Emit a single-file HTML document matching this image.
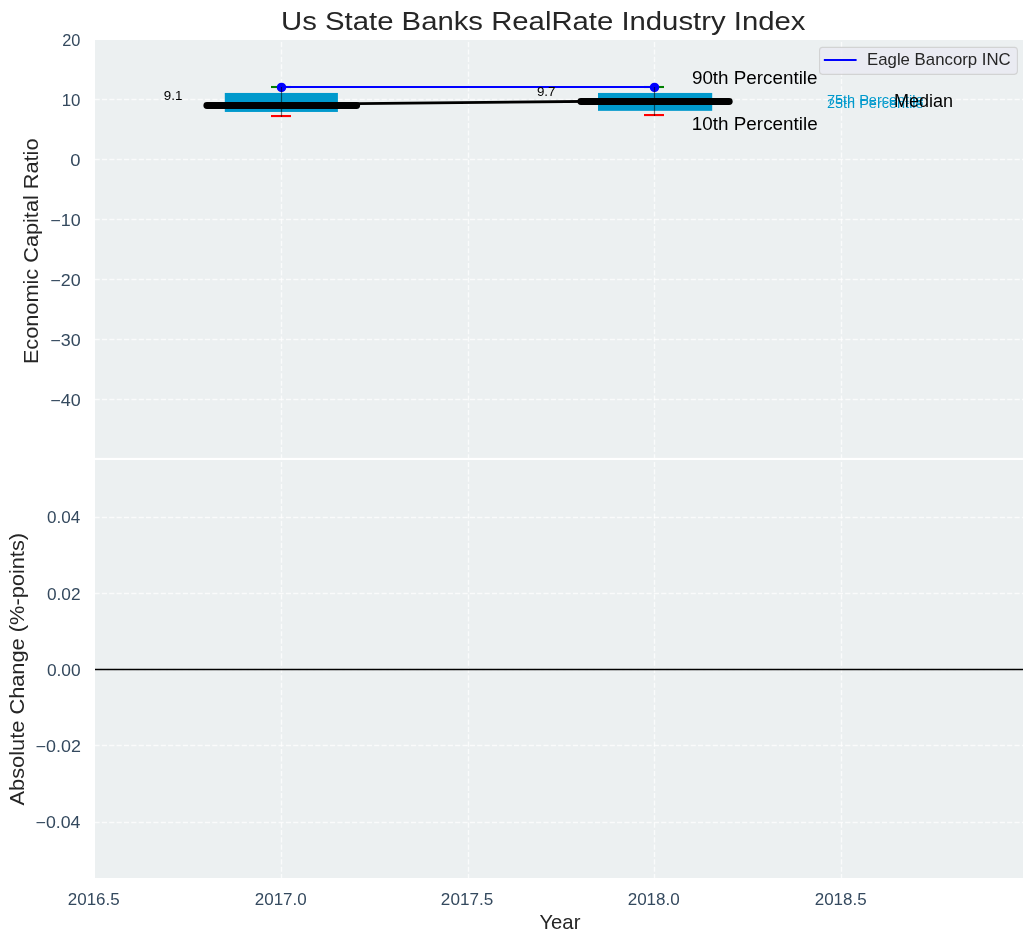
<!DOCTYPE html>
<html><head><meta charset="utf-8"><title>Us State Banks RealRate Industry Index</title>
<style>
html,body{margin:0;padding:0;background:#fff;}
body{width:1034px;height:942px;overflow:hidden;font-family:"Liberation Sans",sans-serif;}
svg{display:block;will-change:transform;}
text{font-family:"Liberation Sans",sans-serif;}
</style></head><body>
<svg width="1034" height="942" viewBox="0 0 1034 942">
<defs>
<clipPath id="c1"><rect x="95" y="40" width="928" height="418"/></clipPath>
<clipPath id="c2"><rect x="95" y="460" width="928" height="418"/></clipPath>
</defs>
<rect x="0" y="0" width="1034" height="942" fill="#ffffff"/>
<rect x="95.0" y="40.0" width="928.0" height="838.0" fill="#ecf0f1"/>
<rect x="95.0" y="457.9" width="928.0" height="2.1" fill="#ffffff"/>
<g clip-path="url(#c1)">
<line x1="95.0" x2="1023.0" y1="99.50" y2="99.50" stroke-dashoffset="0.4" stroke="#ffffff" stroke-opacity="0.72" stroke-width="1.39" stroke-dasharray="5.14 2.22" fill="none"/>
<line x1="95.0" x2="1023.0" y1="159.50" y2="159.50" stroke-dashoffset="0.4" stroke="#ffffff" stroke-opacity="0.72" stroke-width="1.39" stroke-dasharray="5.14 2.22" fill="none"/>
<line x1="95.0" x2="1023.0" y1="219.50" y2="219.50" stroke-dashoffset="0.4" stroke="#ffffff" stroke-opacity="0.72" stroke-width="1.39" stroke-dasharray="5.14 2.22" fill="none"/>
<line x1="95.0" x2="1023.0" y1="279.50" y2="279.50" stroke-dashoffset="0.4" stroke="#ffffff" stroke-opacity="0.72" stroke-width="1.39" stroke-dasharray="5.14 2.22" fill="none"/>
<line x1="95.0" x2="1023.0" y1="339.50" y2="339.50" stroke-dashoffset="0.4" stroke="#ffffff" stroke-opacity="0.72" stroke-width="1.39" stroke-dasharray="5.14 2.22" fill="none"/>
<line x1="95.0" x2="1023.0" y1="399.50" y2="399.50" stroke-dashoffset="0.4" stroke="#ffffff" stroke-opacity="0.72" stroke-width="1.39" stroke-dasharray="5.14 2.22" fill="none"/>
<line x1="281.5" x2="281.5" y1="459.4" y2="30" stroke="#ffffff" stroke-opacity="0.72" stroke-width="1.39" stroke-dasharray="5.14 2.22" fill="none"/>
<line x1="468.5" x2="468.5" y1="459.4" y2="30" stroke="#ffffff" stroke-opacity="0.72" stroke-width="1.39" stroke-dasharray="5.14 2.22" fill="none"/>
<line x1="654.5" x2="654.5" y1="459.4" y2="30" stroke="#ffffff" stroke-opacity="0.72" stroke-width="1.39" stroke-dasharray="5.14 2.22" fill="none"/>
<line x1="841.5" x2="841.5" y1="459.4" y2="30" stroke="#ffffff" stroke-opacity="0.72" stroke-width="1.39" stroke-dasharray="5.14 2.22" fill="none"/>
</g>
<g clip-path="url(#c2)">
<line x1="95.0" x2="1023.0" y1="517.5" y2="517.5" stroke-dashoffset="0.5" stroke="#ffffff" stroke-opacity="0.72" stroke-width="1.39" stroke-dasharray="5.14 2.22" fill="none"/>
<line x1="95.0" x2="1023.0" y1="593.5" y2="593.5" stroke-dashoffset="0.5" stroke="#ffffff" stroke-opacity="0.72" stroke-width="1.39" stroke-dasharray="5.14 2.22" fill="none"/>
<line x1="95.0" x2="1023.0" y1="669.5" y2="669.5" stroke-dashoffset="0.5" stroke="#ffffff" stroke-opacity="0.72" stroke-width="1.39" stroke-dasharray="5.14 2.22" fill="none"/>
<line x1="95.0" x2="1023.0" y1="745.5" y2="745.5" stroke-dashoffset="0.5" stroke="#ffffff" stroke-opacity="0.72" stroke-width="1.39" stroke-dasharray="5.14 2.22" fill="none"/>
<line x1="95.0" x2="1023.0" y1="822.5" y2="822.5" stroke-dashoffset="0.5" stroke="#ffffff" stroke-opacity="0.72" stroke-width="1.39" stroke-dasharray="5.14 2.22" fill="none"/>
<line x1="281.5" x2="281.5" y1="879.2" y2="450" stroke="#ffffff" stroke-opacity="0.72" stroke-width="1.39" stroke-dasharray="5.14 2.22" fill="none"/>
<line x1="468.5" x2="468.5" y1="879.2" y2="450" stroke="#ffffff" stroke-opacity="0.72" stroke-width="1.39" stroke-dasharray="5.14 2.22" fill="none"/>
<line x1="654.5" x2="654.5" y1="879.2" y2="450" stroke="#ffffff" stroke-opacity="0.72" stroke-width="1.39" stroke-dasharray="5.14 2.22" fill="none"/>
<line x1="841.5" x2="841.5" y1="879.2" y2="450" stroke="#ffffff" stroke-opacity="0.72" stroke-width="1.39" stroke-dasharray="5.14 2.22" fill="none"/>
<line x1="95.0" x2="1023.0" y1="669.5" y2="669.5" stroke="#000" stroke-width="1.39"/>
</g>
<g clip-path="url(#c1)">
<rect x="224.8" y="92.95" width="113.10" height="19.00" fill="#0099cc"/>
<rect x="598.0" y="92.95" width="114.20" height="17.90" fill="#0099cc"/>
<line x1="271" x2="291" y1="87" y2="87" stroke="#008000" stroke-width="2.08"/>
<line x1="644" x2="664" y1="87" y2="87" stroke="#008000" stroke-width="2.08"/>
<line x1="271" x2="291" y1="116.05" y2="116.05" stroke="#ff0000" stroke-width="2.08"/>
<line x1="644" x2="664" y1="115.05" y2="115.05" stroke="#ff0000" stroke-width="2.08"/>
<line x1="206.9" x2="356.6" y1="105.5" y2="105.5" stroke="#000" stroke-width="6.94" stroke-linecap="round"/>
<line x1="580.9" x2="729.2" y1="101.45" y2="101.45" stroke="#000" stroke-width="6.94" stroke-linecap="round"/>
<line x1="281.5" x2="654.5" y1="104.45" y2="100.75" stroke="#000" stroke-width="2.78" stroke-linecap="butt"/>
<line x1="281.5" x2="654.5" y1="87" y2="87" stroke="#0000ff" stroke-width="2.08"/>
<circle cx="281.5" cy="87.4" r="4.75" fill="#0000ff"/>
<circle cx="654.5" cy="87.4" r="4.75" fill="#0000ff"/>
<line x1="281.5" x2="281.5" y1="87" y2="117" stroke="#000" stroke-opacity="0.55" stroke-width="1.2"/>
<line x1="654.5" x2="654.5" y1="87" y2="116" stroke="#000" stroke-opacity="0.55" stroke-width="1.2"/>
</g>
<text x="163.73" y="100.0" font-size="13.1" fill="#000" textLength="18.61" lengthAdjust="spacingAndGlyphs">9.1</text>
<text x="536.94" y="96.0" font-size="13.1" fill="#000" textLength="18.54" lengthAdjust="spacingAndGlyphs">9.7</text>
<text x="691.93" y="83.9" font-size="17.5" fill="#000" textLength="125.61" lengthAdjust="spacingAndGlyphs">90th Percentile</text>
<text x="691.88" y="129.6" font-size="17.5" fill="#000" textLength="125.76" lengthAdjust="spacingAndGlyphs">10th Percentile</text>
<text x="826.97" y="104.2" font-size="13.1" fill="#0099cc" textLength="96.66" lengthAdjust="spacingAndGlyphs">75th Percentile</text>
<text x="826.99" y="107.8" font-size="13.1" fill="#0099cc" textLength="96.65" lengthAdjust="spacingAndGlyphs">25th Percentile</text>
<text x="893.9" y="106.8" font-size="17.5" fill="#000" textLength="59.13" lengthAdjust="spacingAndGlyphs">Median</text>
<rect x="819.55" y="47.4" width="197.85" height="26.96" rx="3" ry="3" fill="#eaeaf2" fill-opacity="0.8" stroke="#cccccc" stroke-opacity="0.8" stroke-width="1.1"/>
<line x1="823.85" x2="856.6" y1="60.0" y2="60.0" stroke="#0000ff" stroke-width="2.08"/>
<text x="867.02" y="65.3" font-size="16.1" fill="#262626" textLength="143.72" lengthAdjust="spacingAndGlyphs">Eagle Bancorp INC</text>
<text x="281.13" y="29.8" font-size="26.1" fill="#262626" textLength="524.28" lengthAdjust="spacingAndGlyphs">Us State Banks RealRate Industry Index</text>
<text x="539.39" y="928.8" font-size="20.4" fill="#262626" textLength="41.02" lengthAdjust="spacingAndGlyphs">Year</text>
<text transform="translate(38.2,364.12) rotate(-90)" font-size="20.4" fill="#262626" textLength="225.63" lengthAdjust="spacingAndGlyphs">Economic Capital Ratio</text>
<text transform="translate(24.0,805.46) rotate(-90)" font-size="20.4" fill="#262626" textLength="272.53" lengthAdjust="spacingAndGlyphs">Absolute Change (%-points)</text>
<text x="62.24" y="46.4" font-size="16.0" fill="#34495e" textLength="18.2" lengthAdjust="spacingAndGlyphs">20</text>
<text x="61.66" y="106.4" font-size="16.0" fill="#34495e" textLength="18.81" lengthAdjust="spacingAndGlyphs">10</text>
<text x="70.36" y="166.4" font-size="16.0" fill="#34495e" textLength="10.25" lengthAdjust="spacingAndGlyphs">0</text>
<text x="50.24" y="226.4" font-size="16.0" fill="#34495e" textLength="30.35" lengthAdjust="spacingAndGlyphs">−10</text>
<text x="50.24" y="286.4" font-size="16.0" fill="#34495e" textLength="30.35" lengthAdjust="spacingAndGlyphs">−20</text>
<text x="50.24" y="346.4" font-size="16.0" fill="#34495e" textLength="30.35" lengthAdjust="spacingAndGlyphs">−30</text>
<text x="50.24" y="406.4" font-size="16.0" fill="#34495e" textLength="30.35" lengthAdjust="spacingAndGlyphs">−40</text>
<text x="46.97" y="523.4" font-size="16.0" fill="#34495e" textLength="33.19" lengthAdjust="spacingAndGlyphs">0.04</text>
<text x="46.91" y="599.6" font-size="16.0" fill="#34495e" textLength="33.58" lengthAdjust="spacingAndGlyphs">0.02</text>
<text x="46.93" y="675.8" font-size="16.0" fill="#34495e" textLength="33.7" lengthAdjust="spacingAndGlyphs">0.00</text>
<text x="35.58" y="752.0" font-size="16.0" fill="#34495e" textLength="45.29" lengthAdjust="spacingAndGlyphs">−0.02</text>
<text x="35.62" y="828.2" font-size="16.0" fill="#34495e" textLength="44.8" lengthAdjust="spacingAndGlyphs">−0.04</text>
<text x="67.8" y="904.8" font-size="16.0" fill="#34495e" textLength="51.91" lengthAdjust="spacingAndGlyphs">2016.5</text>
<text x="254.78" y="904.8" font-size="16.0" fill="#34495e" textLength="51.97" lengthAdjust="spacingAndGlyphs">2017.0</text>
<text x="440.89" y="904.8" font-size="16.0" fill="#34495e" textLength="52.35" lengthAdjust="spacingAndGlyphs">2017.5</text>
<text x="627.65" y="904.8" font-size="16.0" fill="#34495e" textLength="52.2" lengthAdjust="spacingAndGlyphs">2018.0</text>
<text x="814.72" y="904.8" font-size="16.0" fill="#34495e" textLength="51.94" lengthAdjust="spacingAndGlyphs">2018.5</text>
</svg>
</body></html>
